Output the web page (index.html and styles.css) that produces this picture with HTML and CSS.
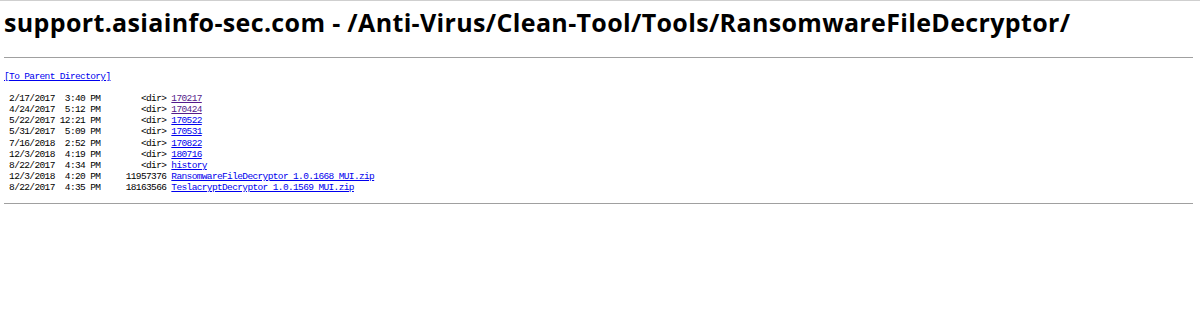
FILE: index.html
```html
<!DOCTYPE html>
<html>
<head>
<meta charset="utf-8">
<title>support.asiainfo-sec.com - /Anti-Virus/Clean-Tool/Tools/RansomwareFileDecryptor/</title>
<link rel="stylesheet" href="styles.css">
</head>
<body>
<h1 class="title">support.asiainfo-sec.com - /Anti-Virus/Clean-Tool/Tools/RansomwareFileDecryptor/</h1>
<hr class="rule">
<pre class="listing"><a href="#">[To Parent Directory]</a><br><br> 2/17/2017  3:40 PM        &lt;dir&gt; <a class="visited" href="#">170217</a><br> 4/24/2017  5:12 PM        &lt;dir&gt; <a class="visited" href="#">170424</a><br> 5/22/2017 12:21 PM        &lt;dir&gt; <a href="#">170522</a><br> 5/31/2017  5:09 PM        &lt;dir&gt; <a href="#">170531</a><br> 7/16/2018  2:52 PM        &lt;dir&gt; <a href="#">170822</a><br> 12/3/2018  4:19 PM        &lt;dir&gt; <a href="#">180716</a><br> 8/22/2017  4:34 PM        &lt;dir&gt; <a href="#">history</a><br> 12/3/2018  4:20 PM     11957376 <a href="#">RansomwareFileDecryptor 1.0.1668 MUI.zip</a><br> 8/22/2017  4:35 PM     18163566 <a href="#">TeslacryptDecryptor 1.0.1569 MUI.zip</a><br></pre>
<hr class="rule">
</body>
</html>
```
FILE: styles.css
```css
html {
  background: #ffffff;
}
body {
  margin: 0;
  padding: 0 7px 0 4px;
  border-top: 1px solid #cfcfcf;
  color: #000;
}
.title {
  margin: 0;
  padding-top: 4px;
  font-family: "Open Sans", "Noto Sans", sans-serif;
  font-weight: 700;
  font-size: 25px;
  line-height: 34px;
  letter-spacing: 0.35px;
  color: #000;
}
.rule {
  margin: 18px 0 0 0;
  border: 0;
  border-top: 1px solid #a0a0a0;
  height: 0;
}
.listing {
  margin: 13px 0 0 0;
  font-family: "Liberation Mono", "DejaVu Sans Mono", monospace;
  font-size: 9.5px;
  letter-spacing: -0.63px;
  line-height: 11.1px;
  color: #000;
}
.listing + .rule {
  margin-top: 10px;
}
.listing a {
  color: #0000ee;
}
.listing a.visited {
  color: #551a8b;
}
```
